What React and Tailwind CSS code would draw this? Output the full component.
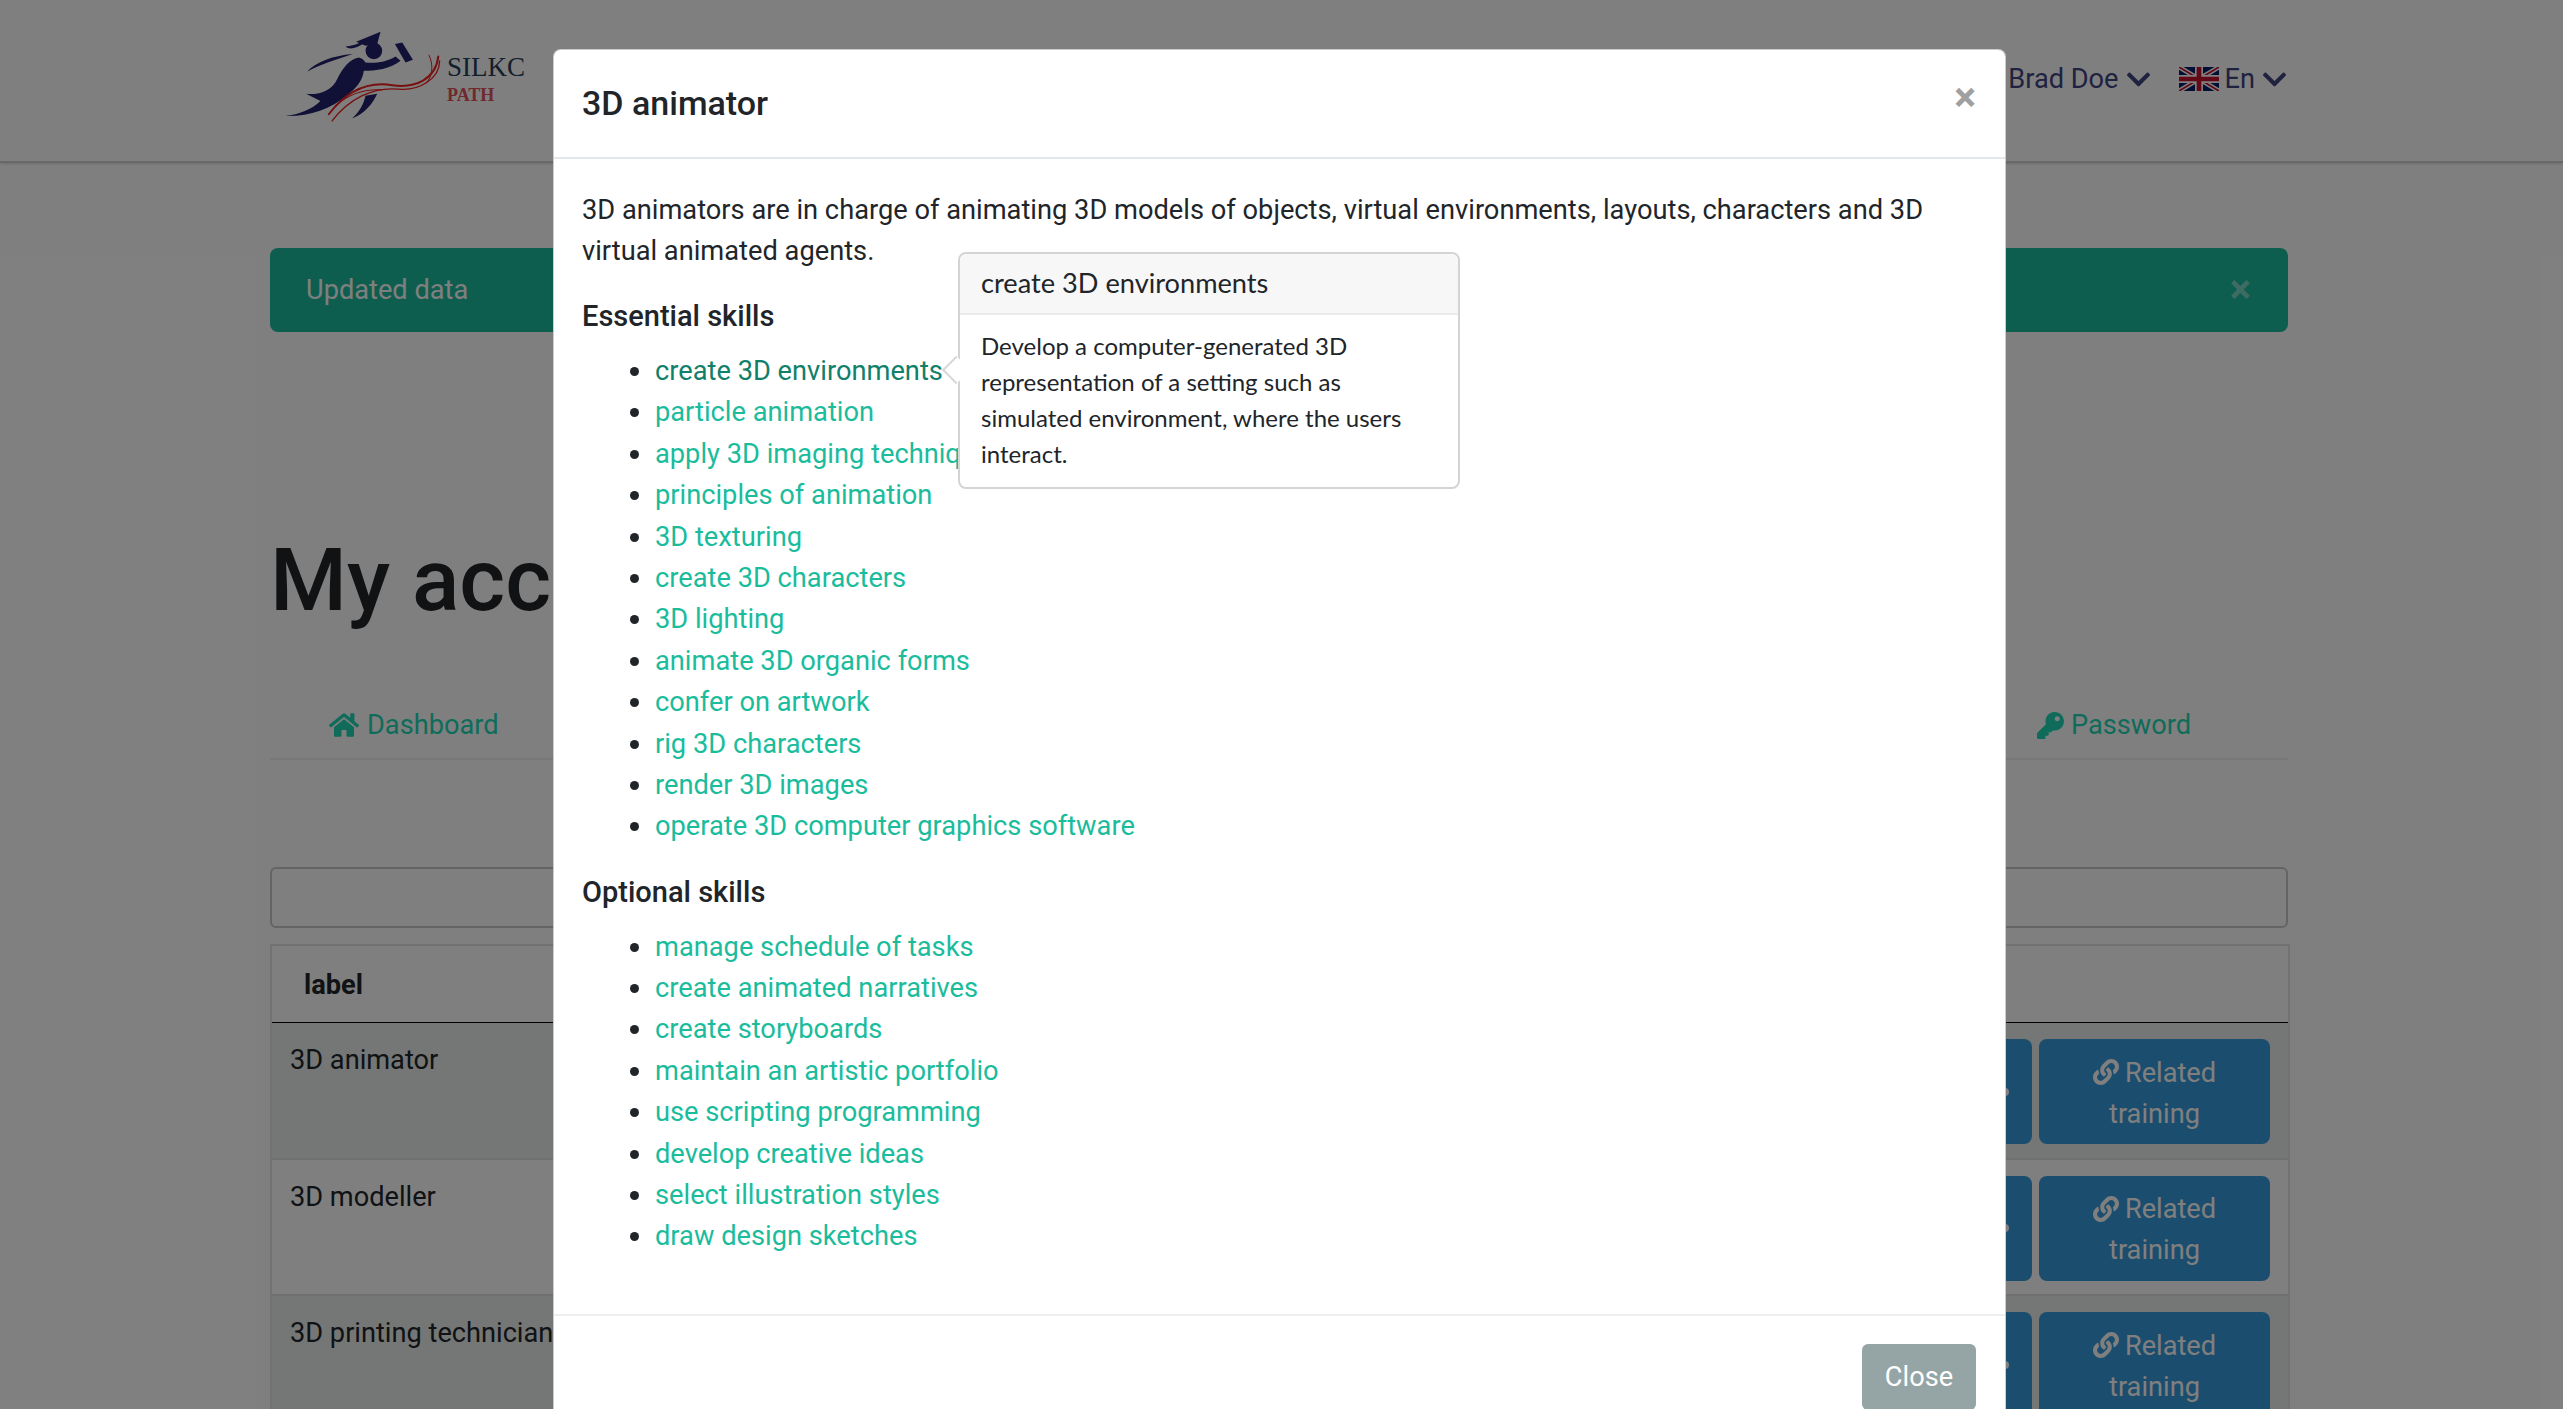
import React from "react";
import { FaChevronDown, FaHome, FaKey, FaLink } from "react-icons/fa";

const essentialSkills = [
  "create 3D environments",
  "particle animation",
  "apply 3D imaging techniques",
  "principles of animation",
  "3D texturing",
  "create 3D characters",
  "3D lighting",
  "animate 3D organic forms",
  "confer on artwork",
  "rig 3D characters",
  "render 3D images",
  "operate 3D computer graphics software",
];

const optionalSkills = [
  "manage schedule of tasks",
  "create animated narratives",
  "create storyboards",
  "maintain an artistic portfolio",
  "use scripting programming",
  "develop creative ideas",
  "select illustration styles",
  "draw design sketches",
];

const rows = [
  { label: "3D animator", striped: true },
  { label: "3D modeller", striped: false },
  { label: "3D printing technician", striped: true },
];

const Logo = () => (
  <div className="flex items-start w-[270px] h-[100px] pl-[12px]">
    <svg width="167" height="97" viewBox="100 90 500 290" className="shrink-0">
      <g fill="#22226e">
        <path d="M322 128 L395 98 L385 135 L350 140 Z" />
        <path d="M290 142 C300 152 322 150 347 130 L335 128 C325 138 305 140 290 142 Z" />
        <circle cx="375" cy="155" r="25" />
        <path d="M175 218 C200 190 250 170 312 165 C265 182 215 195 175 218 Z" />
        <path d="M330 175 C300 180 280 210 265 240 C250 272 215 288 172 284 L215 305 C190 330 150 345 110 350 C180 352 245 330 295 288 C320 268 340 250 345 215 C380 215 425 210 455 185 L440 172 C410 190 380 192 350 190 C345 182 340 177 330 175 Z" />
        <path d="M350 290 L385 284 C372 315 345 345 310 358 C335 335 345 312 350 290 Z" />
        <path d="M438 135 L460 130 L492 182 L470 190 L455 165 Z" />
      </g>
      <g fill="none" stroke="#f02020" strokeLinecap="round">
        <path strokeWidth="6" d="M240 345 C290 280 350 245 430 258 C500 268 560 240 568 172" />
        <path strokeWidth="4" d="M250 365 C300 300 370 262 450 270 C510 275 572 240 572 185" />
        <path strokeWidth="3" d="M262 318 C300 285 345 268 400 272" />
        <path strokeWidth="3" d="M540 168 C555 200 550 235 530 252" />
      </g>
    </svg>
    <div className="font-['Liberation_Serif',serif] -ml-[2px] mt-[21px]">
      <div className="text-[27px] leading-[34px] text-[#24405a]">SILKC</div>
      <div className="text-[18px] leading-[22px] font-bold text-[#e0505c]">PATH</div>
    </div>
  </div>
);

const UkFlag = () => (
  <svg width="40" height="24" viewBox="0 0 60 36" className="shrink-0">
    <rect width="60" height="36" fill="#012169" />
    <path d="M0 0 L60 36 M60 0 L0 36" stroke="#fff" strokeWidth="7" />
    <path d="M0 0 L60 36 M60 0 L0 36" stroke="#c8102e" strokeWidth="2.5" />
    <path d="M30 0 V36 M0 18 H60" stroke="#fff" strokeWidth="12" />
    <path d="M30 0 V36 M0 18 H60" stroke="#c8102e" strokeWidth="7" />
  </svg>
);

// everything that sits under the dark backdrop
const Page = () => (
  <div className="h-[1409px] overflow-hidden bg-white">
    <nav className="h-[163px] border-b-2 border-[#d0d0d0] shadow-sm">
      <div className="w-[2018px] ml-[270px] flex justify-between pt-[29px]">
        <Logo />
        <div className="flex items-center h-[40px] mt-[30px] text-[27.2px] text-[#3f4480]">
          <span>Brad Doe</span>
          <FaChevronDown className="ml-[6px] text-[27px]" />
          <span className="ml-[27px] mr-[6px]"><UkFlag /></span>
          <span>En</span>
          <FaChevronDown className="ml-[6px] text-[27px]" />
        </div>
      </div>
    </nav>

    <div className="w-[2018px] ml-[270px]">
      <div className="mt-[85px] h-[84px] rounded-[8px] bg-[#1abc9c] text-white text-[27.2px] flex items-center justify-between pl-[36px] pr-[37px]">
        <span>Updated data</span>
        <span className="font-bold text-[40px] text-[#7cd6c4] leading-none">×</span>
      </div>

      <h1 className="mt-[198px] text-[88px] leading-[100px] font-medium text-[#212529]">My account</h1>

      <div className="mt-[60px] h-[70px] border-b-2 border-[#f0f0f0] flex justify-between text-[27.2px] text-[#20d8b4] pt-[15px] pl-[59px] pr-[97px]">
        <span className="flex items-center h-[40px] gap-[8px]"><FaHome className="text-[30px]" />Dashboard</span>
        <span className="flex items-center h-[40px] gap-[7px]"><FaKey className="text-[27px]" />Password</span>
      </div>

      <div className="mt-[107px] h-[61px] border-2 border-[#c8c8c8] rounded-[6px]" />

      <div className="mt-[16px] w-[2020px] border-2 border-[#e4e4e4] text-[27.2px] text-[#212529]">
        <div className="h-[77px] border-b border-black font-bold flex items-center pl-[32px] pt-[2px]">label</div>
        {rows.map((row) => (
          <div
            key={row.label}
            className={`h-[136.5px] flex justify-between border-b-2 border-[#e0e0e0] pl-[18px] pr-[18px] pt-[16px] ${row.striped ? "bg-[#eaeeec]" : "bg-white"}`}
          >
            <span className="leading-[41px] mt-[1px]">{row.label}</span>
            <div className="flex gap-[7px]">
              <button className="w-[180px] h-[105px] rounded-[8px] bg-[#369adc] flex items-center justify-end pr-[23px]">
                <span className="block w-[4px] h-[8px] rounded-r-full bg-white" />
              </button>
              <button className="w-[231px] h-[105px] rounded-[8px] bg-[#369adc] px-[30px] pt-[4px] text-white text-[27.2px] leading-[41px]">
                <FaLink className="inline mr-[6px] text-[26px] -mt-[4px]" />Related training
              </button>
            </div>
          </div>
        ))}
      </div>
    </div>
  </div>
);

const SkillList = ({ skills }) => (
  <ul className="list-disc pl-[73px] text-[#1abc9c]">
    {skills.map((skill, i) => (
      <li key={skill} className="h-[41.4px] marker:text-[#212529] marker:text-[30px] leading-[41.4px]">
        <span className={skills === essentialSkills && i === 0 ? "text-[#11806a]" : ""}>{skill}</span>
      </li>
    ))}
  </ul>
);

const Modal = () => (
  <div className="absolute left-[553px] top-[49px] w-[1453px] h-[1400px] bg-white rounded-t-[8px] border border-black/20 text-[#212529] text-[27.25px]">
    <div className="h-[109px] border-b-2 border-[#e4e7ea] flex items-center justify-between pl-[28px] pr-[29px]">
      <h2 className="text-[34px] font-medium leading-[40px] -mt-[2px]">3D animator</h2>
      <span className="text-[41px] font-bold text-[#a0a0a0] leading-none -mt-[12px]">×</span>
    </div>
    <div className="pl-[28px] pr-[40px] pt-[31px]">
      <p className="leading-[41px]">
        3D animators are in charge of animating 3D models of objects, virtual environments, layouts, characters and 3D virtual animated agents.
      </p>
      <h5 className="mt-[28px] mb-[16px] text-[29px] leading-[33px] font-medium">Essential skills</h5>
      <SkillList skills={essentialSkills} />
      <h5 className="mt-[30px] mb-[16px] text-[29px] leading-[33px] font-medium">Optional skills</h5>
      <SkillList skills={optionalSkills} />
    </div>
    <div className="absolute left-0 right-0 top-[1264px] border-t-2 border-[#eceef0] flex justify-end pt-[28px] pr-[29px]">
      <button className="w-[114px] h-[66px] rounded-[6px] bg-[#95a5a6] text-white text-[27.2px]">Close</button>
    </div>
  </div>
);

const Popover = () => (
  <div className="absolute left-[958px] top-[252px] w-[502px] h-[237px] bg-white rounded-[8px] border-2 border-[#d4d4d4] font-['Lato',sans-serif] text-[#212529]">
    <div className="absolute -left-[14px] top-[106px] w-[20px] h-[20px] rotate-45 bg-white border-l-2 border-b-2 border-[#d8d8d8]" />
    <div className="relative h-[61px] rounded-t-[8px] bg-[#f7f7f7] border-b-2 border-[#ebebeb] flex items-center px-[21px] text-[27.2px]">
      create 3D environments
    </div>
    <div className="relative pl-[21px] pr-[40px] pt-[13px] text-[24px] leading-[36px]">
      Develop a computer-generated 3D representation of a setting such as simulated environment, where the users interact.
    </div>
  </div>
);

const App = () => {
  return (
    <div className="relative h-[1409px] overflow-hidden font-['Roboto',sans-serif]">
      <Page />
      <div className="absolute inset-0 bg-black/50" />
      <Modal />
      <Popover />
    </div>
  );
};

export default App;
